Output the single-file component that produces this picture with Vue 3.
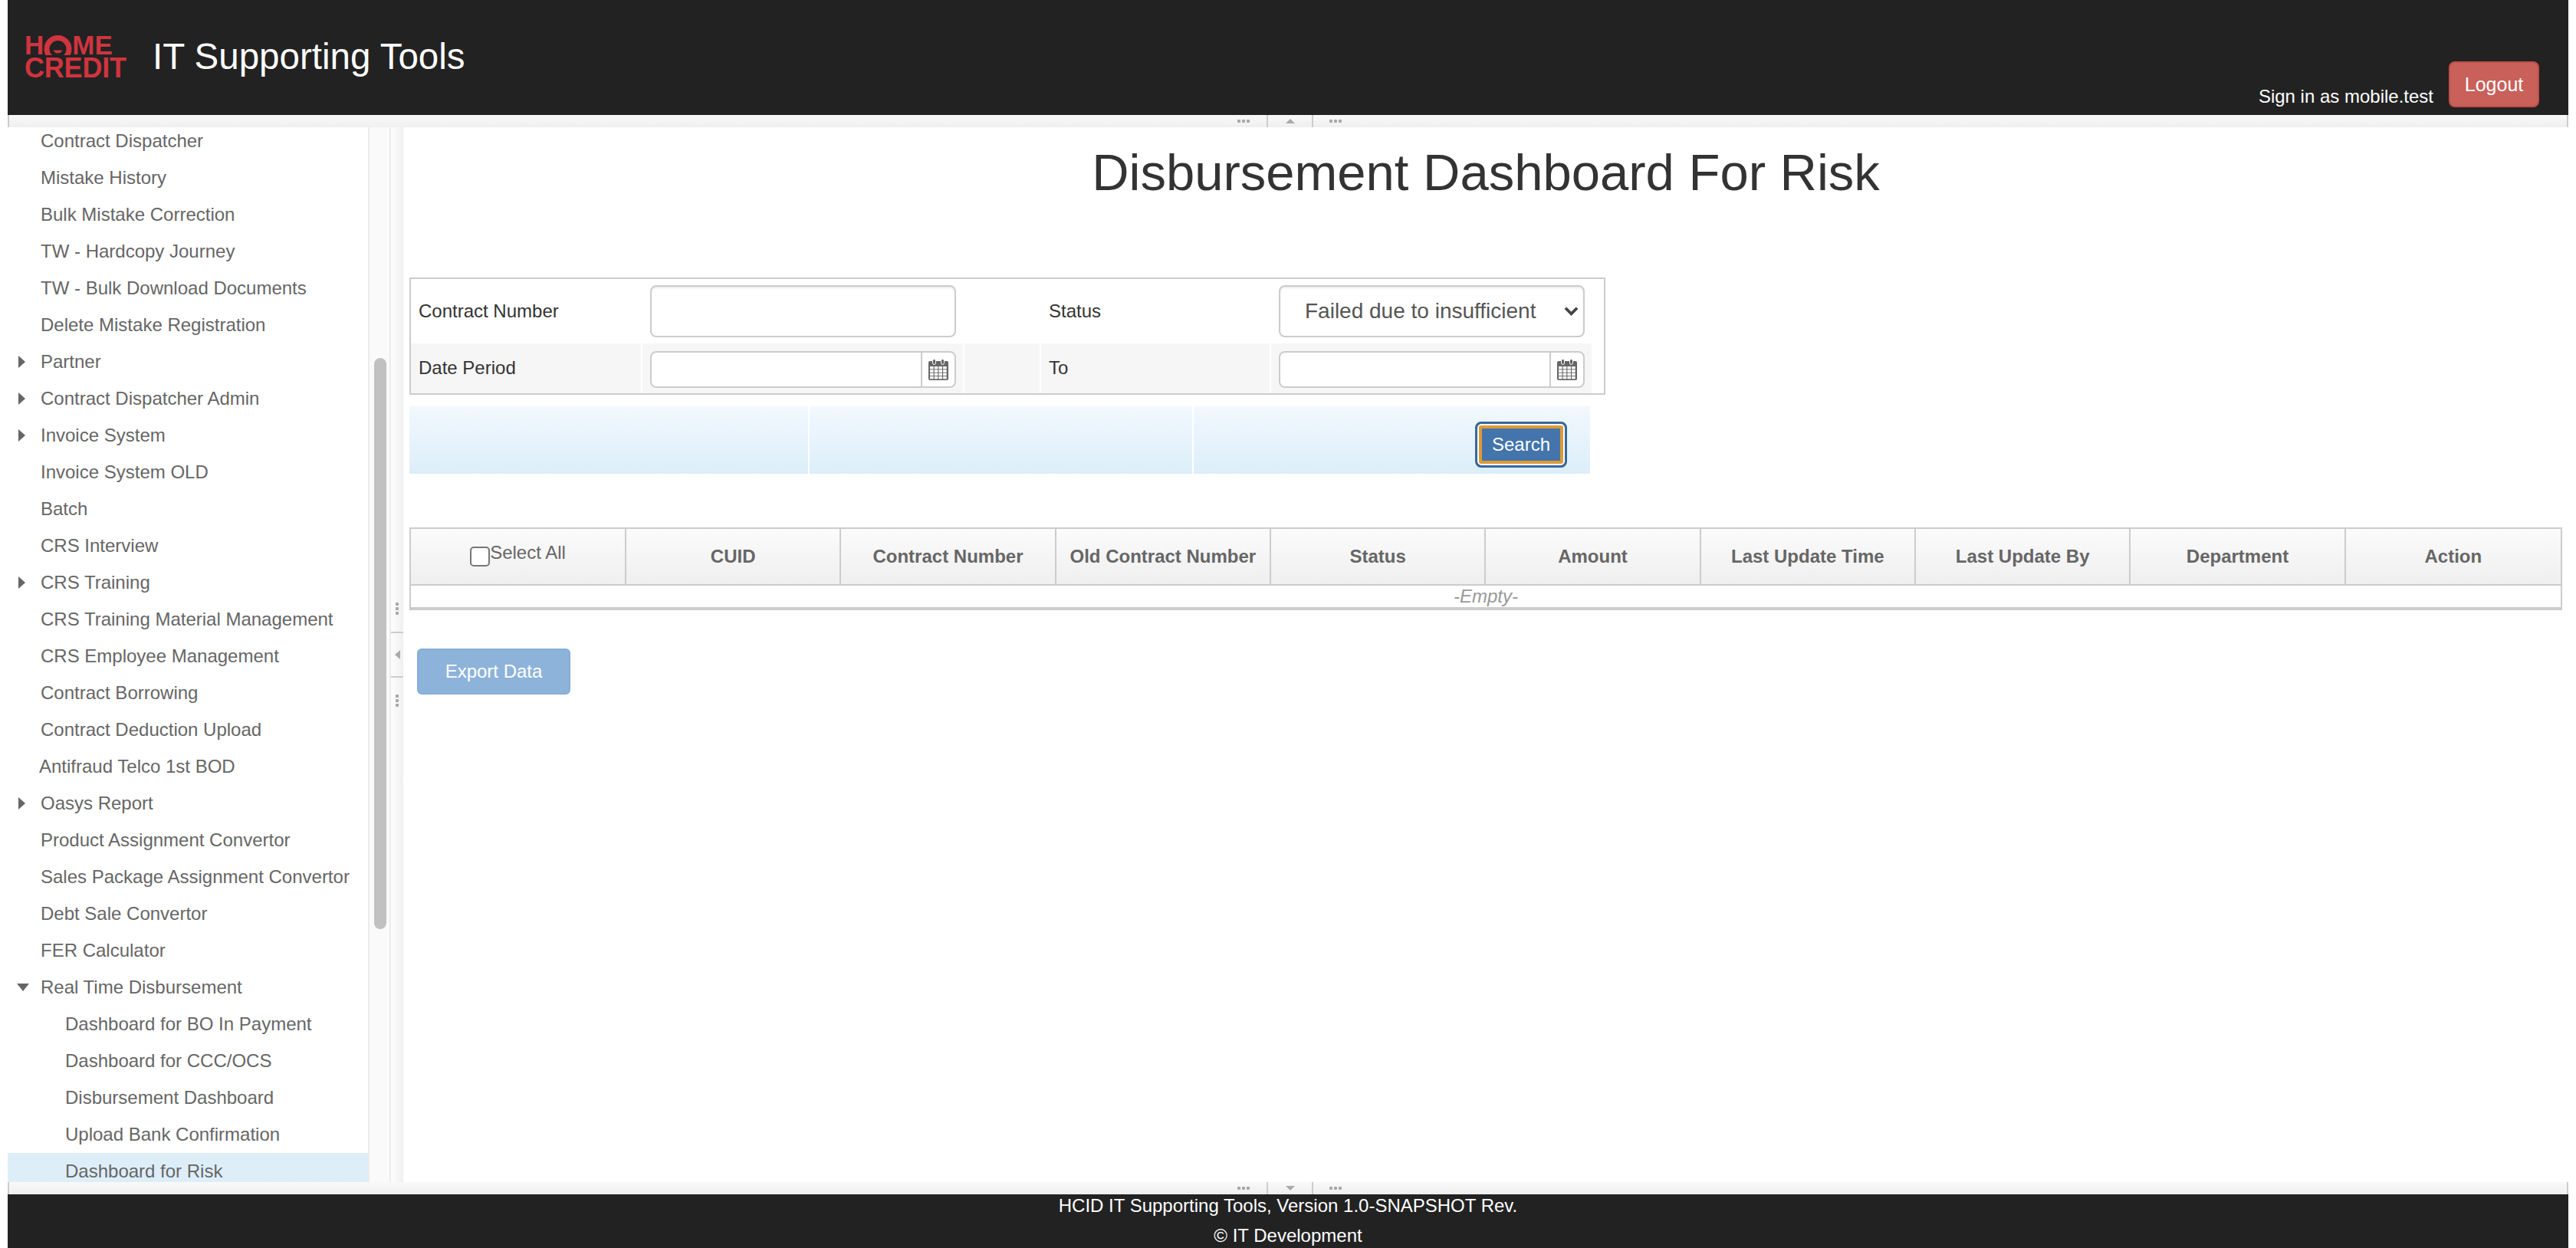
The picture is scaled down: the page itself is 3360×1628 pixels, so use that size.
<script setup>
const menu = [
  { label: 'Contract Dispatcher' },
  { label: 'Mistake History' },
  { label: 'Bulk Mistake Correction' },
  { label: 'TW - Hardcopy Journey' },
  { label: 'TW - Bulk Download Documents' },
  { label: 'Delete Mistake Registration' },
  { label: 'Partner', arrow: 'right' },
  { label: 'Contract Dispatcher Admin', arrow: 'right' },
  { label: 'Invoice System', arrow: 'right' },
  { label: 'Invoice System OLD' },
  { label: 'Batch' },
  { label: 'CRS Interview' },
  { label: 'CRS Training', arrow: 'right' },
  { label: 'CRS Training Material Management' },
  { label: 'CRS Employee Management' },
  { label: 'Contract Borrowing' },
  { label: 'Contract Deduction Upload' },
  { label: 'Antifraud Telco 1st BOD', tight: true },
  { label: 'Oasys Report', arrow: 'right' },
  { label: 'Product Assignment Convertor' },
  { label: 'Sales Package Assignment Convertor' },
  { label: 'Debt Sale Convertor' },
  { label: 'FER Calculator' },
  { label: 'Real Time Disbursement', arrow: 'down' },
  { label: 'Dashboard for BO In Payment', sub: true },
  { label: 'Dashboard for CCC/OCS', sub: true },
  { label: 'Disbursement Dashboard', sub: true },
  { label: 'Upload Bank Confirmation', sub: true },
  { label: 'Dashboard for Risk', sub: true, active: true },
]

const columns = [
  'CUID',
  'Contract Number',
  'Old Contract Number',
  'Status',
  'Amount',
  'Last Update Time',
  'Last Update By',
  'Department',
  'Action',
]

const calendarRows = [0, 1, 2, 3]
const calendarCols = [0, 1, 2, 3]
</script>

<template>
  <div class="page">
    <header class="top">
      <div class="brand">
        <div class="logo">
          <div class="logo-home">H<svg class="logo-o" viewBox="0 0 37 26" width="37" height="26"><circle cx="18.5" cy="18" r="14.5" fill="none" stroke="#d0343e" stroke-width="7" /><path d="M13 19.5h11a5.5 4 0 0 1-11 0z" fill="#d0343e" /></svg>ME</div>
          <div class="logo-credit">CREDIT</div>
        </div>
        <div class="app-title">IT Supporting Tools</div>
      </div>
      <div class="account">
        <span class="signin">Sign in as mobile.test</span>
        <button class="btn-logout">Logout</button>
      </div>
    </header>

    <div class="resizer-h">
      <div class="dots"><i></i><i></i><i></i></div>
      <div class="toggle"><span class="tri-up"></span></div>
      <div class="dots"><i></i><i></i><i></i></div>
    </div>

    <div class="middle">
      <aside class="side">
        <ul class="menu">
          <li
            v-for="m in menu"
            :key="m.label"
            class="menu-item"
            :class="{ 'menu-item--sub': m.sub, 'menu-item--active': m.active, 'menu-item--tight': m.tight }"
          >
            <span v-if="m.arrow" :class="m.arrow === 'down' ? 'arrow-down' : 'arrow-right'"></span>
            {{ m.label }}
          </li>
        </ul>
      </aside>
      <div class="scroll-track"><div class="scroll-thumb"></div></div>
      <div class="resizer-v">
        <div class="dots dots--v"><i></i><i></i><i></i></div>
        <div class="toggle-v"><span class="tri-left"></span></div>
        <div class="dots dots--v"><i></i><i></i><i></i></div>
      </div>

      <main class="content">
        <h1 class="title">Disbursement Dashboard For Risk</h1>

        <div class="filter">
          <div class="filter-row">
            <div class="cell cell-label">Contract Number</div>
            <div class="cell cell-input"><input class="field field--tall" type="text" /></div>
            <div class="cell cell-gap"></div>
            <div class="cell cell-label">Status</div>
            <div class="cell cell-input">
              <div class="field field--tall select-box">
                <span>Failed due to insufficient</span>
                <svg class="chevron" viewBox="0 0 20 14" width="19" height="14"><path d="M2 2.5l8 8 8-8" fill="none" stroke="#444" stroke-width="4" /></svg>
              </div>
            </div>
          </div>
          <div class="filter-row filter-row--alt">
            <div class="cell cell-label">Date Period</div>
            <div class="cell cell-input">
              <div class="field date-box">
                <div class="date-text"></div>
                <div class="date-addon">
                  <svg viewBox="0 0 26 28" width="26" height="28">
                    <path d="M2 3h22a2 2 0 0 1 2 2v21a2 2 0 0 1-2 2H2a2 2 0 0 1-2-2V5a2 2 0 0 1 2-2z" fill="#666" />
                    <rect x="5.5" y="0.5" width="4" height="7" rx="2" fill="#666" stroke="#fff" />
                    <rect x="16.5" y="0.5" width="4" height="7" rx="2" fill="#666" stroke="#fff" />
                    <template v-for="r in calendarRows" :key="r">
                      <rect v-for="c in calendarCols" :key="c" :x="2 + c * 5.7" :y="10 + r * 4.3" width="4.6" height="3.4" fill="#fff" />
                    </template>
                  </svg>
                </div>
              </div>
            </div>
            <div class="cell cell-gap"></div>
            <div class="cell cell-label">To</div>
            <div class="cell cell-input">
              <div class="field date-box">
                <div class="date-text"></div>
                <div class="date-addon">
                  <svg viewBox="0 0 26 28" width="26" height="28">
                    <path d="M2 3h22a2 2 0 0 1 2 2v21a2 2 0 0 1-2 2H2a2 2 0 0 1-2-2V5a2 2 0 0 1 2-2z" fill="#666" />
                    <rect x="5.5" y="0.5" width="4" height="7" rx="2" fill="#666" stroke="#fff" />
                    <rect x="16.5" y="0.5" width="4" height="7" rx="2" fill="#666" stroke="#fff" />
                    <template v-for="r in calendarRows" :key="r">
                      <rect v-for="c in calendarCols" :key="c" :x="2 + c * 5.7" :y="10 + r * 4.3" width="4.6" height="3.4" fill="#fff" />
                    </template>
                  </svg>
                </div>
              </div>
            </div>
          </div>
        </div>

        <div class="action-bar">
          <div class="action-cell"></div>
          <div class="action-cell"></div>
          <div class="action-cell action-cell--c">
            <button class="btn-search">Search</button>
          </div>
        </div>

        <div class="grid">
          <div class="grid-head">
            <div class="grid-th grid-th--check">
              <input class="check" type="checkbox" />
              <span class="select-all">Select All</span>
            </div>
            <div v-for="c in columns" :key="c" class="grid-th">{{ c }}</div>
          </div>
          <div class="grid-empty">-Empty-</div>
        </div>

        <button class="btn-export">Export Data</button>
      </main>
    </div>

    <div class="resizer-h">
      <div class="dots"><i></i><i></i><i></i></div>
      <div class="toggle"><span class="tri-down"></span></div>
      <div class="dots"><i></i><i></i><i></i></div>
    </div>

    <footer class="bottom">
      <div>HCID IT Supporting Tools, Version 1.0-SNAPSHOT Rev.</div>
      <div class="bottom-copy">© IT Development</div>
    </footer>
  </div>
</template>

<style>
html, body {
  margin: 0;
  background: #fff;
}
</style>

<style scoped>
.page {
  width: 3360px;
  height: 1628px;
  padding: 0 10px;
  box-sizing: border-box;
  display: flex;
  flex-direction: column;
  overflow: hidden;
  font-family: "Liberation Sans", Arial, sans-serif;
  font-size: 24px;
  color: #333;
  background: #fff;
}

.top {
  height: 150px;
  flex: none;
  background: #222;
  display: flex;
  justify-content: space-between;
  padding: 0 38px 0 22px;
  box-sizing: border-box;
}

.brand {
  display: flex;
  align-items: flex-start;
  padding-top: 46px;
}

.logo {
  width: 134px;
  color: #d0343e;
  font-weight: 700;
  line-height: 26px;
}

.logo-home {
  display: flex;
  align-items: center;
  height: 26px;
  font-size: 35px;
}

.logo-o {
  flex: none;
}

.logo-credit {
  margin-top: 4px;
  height: 26px;
  font-size: 36px;
  letter-spacing: -0.2px;
}

.app-title {
  margin: 0 0 0 33px;
  font-size: 47.5px;
  line-height: 56px;
  color: #fff;
}

.account {
  display: flex;
  align-items: flex-end;
  padding-bottom: 10px;
}

.signin {
  color: #fff;
  line-height: 28px;
  margin-right: 20px;
}

.btn-logout {
  width: 118px;
  height: 60px;
  background: #c9605a;
  border: 2px solid #bf4f49;
  border-radius: 8px;
  color: #fff;
  font: 25px "Liberation Sans", Arial, sans-serif;
  padding: 0;
}

.resizer-h {
  height: 16px;
  flex: none;
  display: flex;
  justify-content: center;
  align-items: center;
  box-sizing: border-box;
  padding-left: 4px;
  border-left: 2px solid #ccc;
  border-right: 2px solid #ccc;
  background: linear-gradient(#f9f9f9, #efefef);
}

.dots {
  display: flex;
  gap: 2px;
  width: 16px;
}

.dots i {
  display: block;
  width: 4px;
  height: 4px;
  border-radius: 1px;
  background: #a8a8a8;
}

.dots--v {
  flex-direction: column;
  width: 4px;
}

.toggle {
  width: 61px;
  height: 16px;
  box-sizing: border-box;
  margin: 0 21px 0 22px;
  border-left: 2px solid #ccc;
  border-right: 2px solid #ccc;
  display: flex;
  align-items: center;
  justify-content: center;
}

.tri-up {
  border: 6px solid transparent;
  border-top: 0;
  border-bottom: 6px solid #aaa;
}

.tri-down {
  border: 6px solid transparent;
  border-bottom: 0;
  border-top: 6px solid #aaa;
}

.tri-left {
  border: 6px solid transparent;
  border-left: 0;
  border-right: 7px solid #aaa;
}

.middle {
  flex: 1;
  min-height: 0;
  display: flex;
}

.side {
  width: 470px;
  flex: none;
  overflow: hidden;
  border-right: 2px solid #ececec;
}

.menu {
  list-style: none;
  margin: -6px 0 0;
  padding: 0;
}

.menu-item {
  position: relative;
  height: 48px;
  line-height: 48px;
  padding-left: 43px;
  color: #666;
  white-space: nowrap;
}

.menu-item--sub {
  padding-left: 75px;
}

.menu-item--tight {
  padding-left: 41px;
}

.menu-item--active {
  background: #deeef9;
}

.arrow-right {
  position: absolute;
  left: 14px;
  top: 16px;
  border: 8px solid transparent;
  border-right: 0;
  border-left: 9px solid #666;
}

.arrow-down {
  position: absolute;
  left: 12px;
  top: 19px;
  border: 8px solid transparent;
  border-bottom: 0;
  border-top: 10px solid #666;
}

.scroll-track {
  width: 26px;
  flex: none;
  background: #fafafa;
  padding: 301px 4px 0 6px;
  box-sizing: border-box;
}

.scroll-thumb {
  height: 745px;
  border-radius: 8px;
  background: #c1c1c1;
}

.resizer-v {
  width: 18px;
  flex: none;
  box-sizing: border-box;
  border-left: 2px solid #ececec;
  background: linear-gradient(90deg, #fdfdfd, #f0f0f0);
  display: flex;
  flex-direction: column;
  align-items: center;
  justify-content: center;
  gap: 22px;
}

.toggle-v {
  width: 100%;
  height: 60px;
  border-top: 2px solid #ccc;
  border-bottom: 2px solid #ccc;
  box-sizing: border-box;
  display: flex;
  align-items: center;
  justify-content: center;
}

.content {
  flex: 1;
  min-width: 0;
  padding: 0 8px;
  box-sizing: border-box;
}

.title {
  margin: 0;
  height: 196px;
  padding-top: 18px;
  box-sizing: border-box;
  font-size: 67px;
  line-height: 82px;
  font-weight: 400;
  text-align: center;
  color: #333;
}

.filter {
  width: 1560px;
  height: 153px;
  box-sizing: border-box;
  border: 2px solid #ccc;
}

.filter-row {
  height: 84px;
  display: grid;
  grid-template-columns: 300px 418px 98px 298px 418px;
  column-gap: 2px;
  width: 1540px;
}

.filter-row--alt {
  height: 65px;
}

.filter-row--alt .cell {
  background: #f6f6f6;
}

.cell {
  display: flex;
  align-items: center;
  box-sizing: border-box;
}

.cell-label {
  padding-left: 10px;
}

.filter-row--alt .cell-label {
  padding-bottom: 2px;
}

.cell-input {
  padding-left: 10px;
}

.filter-row--alt .cell-input {
  padding-top: 3px;
}

.field {
  width: 399px;
  box-sizing: border-box;
  border: 2px solid #ccc;
  border-radius: 8px;
  background: #fff;
  box-shadow: inset 0 2px 2px rgba(0, 0, 0, 0.075);
}

.field--tall {
  height: 68px;
  padding: 0;
}

.select-box {
  display: flex;
  align-items: center;
  justify-content: space-between;
  padding: 0 6px 0 32px;
  font-size: 28px;
  color: #555;
}

.chevron {
  flex: none;
}

.date-box {
  height: 48px;
  display: flex;
  box-shadow: none;
}

.date-text {
  flex: 1;
}

.date-addon {
  width: 44px;
  box-sizing: border-box;
  border-left: 2px solid #ccc;
  display: flex;
  align-items: center;
  justify-content: center;
}

.action-bar {
  margin-top: 15px;
  width: 1540px;
  height: 88px;
  display: grid;
  grid-template-columns: 520px 499px 517px;
  column-gap: 2px;
}

.action-cell {
  background: linear-gradient(#f2f8fe, #dceef9);
}

.action-cell--c {
  display: flex;
  justify-content: flex-end;
  align-items: flex-start;
  padding: 20px 30px 0 0;
}

.btn-search {
  width: 120px;
  height: 60px;
  box-sizing: border-box;
  border: 3px solid #35689b;
  border-radius: 8px;
  background: #4375ac;
  box-shadow: inset 0 0 0 2px #fff, inset 0 0 0 6px #dd9a37;
  color: #fff;
  font: 24px "Liberation Sans", Arial, sans-serif;
  padding: 0;
}

.grid {
  margin-top: 70px;
  box-sizing: border-box;
  border: 2px solid #ccc;
  border-bottom-width: 4px;
}

.grid-head {
  height: 74px;
  box-sizing: border-box;
  border-bottom: 2px solid #ccc;
  display: grid;
  grid-template-columns: 281px repeat(9, 1fr);
  background: linear-gradient(#fbfbfb, #efefef);
}

.grid-th {
  display: flex;
  align-items: center;
  justify-content: center;
  box-sizing: border-box;
  border-right: 2px solid #ccc;
  font-weight: 700;
  color: #666;
  white-space: nowrap;
}

.grid-th:last-child {
  border-right: 0;
}

.grid-th--check {
  font-weight: 400;
}

.check {
  appearance: none;
  width: 26px;
  height: 26px;
  margin: 0;
  box-sizing: border-box;
  border: 2px solid #767676;
  border-radius: 5px;
  background: #fff;
}

.select-all {
  margin-top: -10px;
}

.grid-empty {
  height: 28px;
  line-height: 28px;
  text-align: center;
  font-style: italic;
  color: #999;
}

.btn-export {
  display: block;
  margin: 50px 0 0 10px;
  width: 200px;
  height: 60px;
  border: 2px solid #86aed7;
  border-radius: 6px;
  background: #8eb3da;
  color: #fff;
  font: 24px "Liberation Sans", Arial, sans-serif;
  padding: 0;
}

.bottom {
  height: 70px;
  flex: none;
  overflow: hidden;
  background: #222;
  color: #fff;
  text-align: center;
  line-height: 30px;
}

.bottom-copy {
  margin-top: 9px;
}
</style>
